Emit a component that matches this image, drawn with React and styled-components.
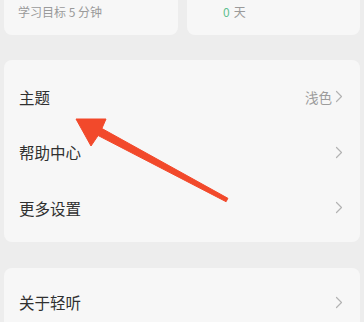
import styled, { createGlobalStyle } from "styled-components"

const Global = createGlobalStyle`
  html, body {
    margin: 0;
    padding: 0;
    background: #ededed;
    font-family: "Noto Sans CJK SC", "Noto Sans", sans-serif;
  }
`;

const Page = styled.div`
  position: relative;
  width: 364px;
  height: 322px;
  overflow: hidden;
  box-sizing: border-box;
  padding: 0 4px;
  background: #ededed;
`;

const TopRow = styled.div`
  display: grid;
  grid-template-columns: 174px 173px;
  gap: 9px;
  height: 35px;
  margin-bottom: 25px;
`;

const StatCard = styled.div`
  display: flex;
  align-items: flex-start;
  padding: 3px 0 0 ${p => p.$indent}px;
  background: #f7f7f7;
  border-radius: 0 0 8px 8px;
  font-size: 12px;
  color: #9a9a9a;
`;

const Green = styled.span`
  color: #5ebf8e;
  margin-right: 4px;
`;

const Card = styled.div`
  background: #f7f7f7;
  border-radius: 8px;
  padding: ${p => p.$pad};
  margin-bottom: ${p => p.$gap || 0}px;
`;

const Row = styled.div`
  display: flex;
  align-items: center;
  justify-content: space-between;
  height: 55.5px;
  padding: 0 17px 0 15px;
`;

const Label = styled.span`
  font-size: 15.5px;
  color: #303030;
`;

const Right = styled.span`
  display: flex;
  align-items: center;
  gap: 3px;
  font-size: 13.5px;
  color: #9c9c9c;
`;

const Overlay = styled.svg`
  position: absolute;
  left: 0;
  top: 0;
  pointer-events: none;
`;

function Chevron() {
  return (
    <svg width="8" height="13" viewBox="0 0 8 13">
      <path d="M1.5 1.5 L6.5 6.5 L1.5 11.5" fill="none" stroke="#b3b3b3" strokeWidth="1.2" strokeLinecap="round" strokeLinejoin="round" />
    </svg>
  );
}

const menu = [
  { label: "主题", value: "浅色" },
  { label: "帮助中心" },
  { label: "更多设置" },
];

export default function App() {
  return (
    <Page>
      <Global />
      <TopRow>
        <StatCard $indent={14}>学习目标 5 分钟</StatCard>
        <StatCard $indent={36}><Green>0</Green>天</StatCard>
      </TopRow>

      <Card $pad="9px 0 6px" $gap={26}>
        {menu.map(item => (
          <Row key={item.label}>
            <Label>{item.label}</Label>
            <Right>
              {item.value}
              <Chevron />
            </Right>
          </Row>
        ))}
      </Card>

      <Card $pad="7px 0 6px">
        <Row>
          <Label>关于轻听</Label>
          <Right><Chevron /></Right>
        </Row>
      </Card>

      <Overlay width="364" height="322" viewBox="0 0 364 322">
        <polygon
          points="76,119 106,119 101.9,128.5 227.9,198.3 226.1,201.7 98.1,135.5 91,146"
          fill="#f2492b"
          stroke="#f2492b"
          strokeWidth="1"
          strokeLinejoin="round"
        />
      </Overlay>
    </Page>
  );
}
